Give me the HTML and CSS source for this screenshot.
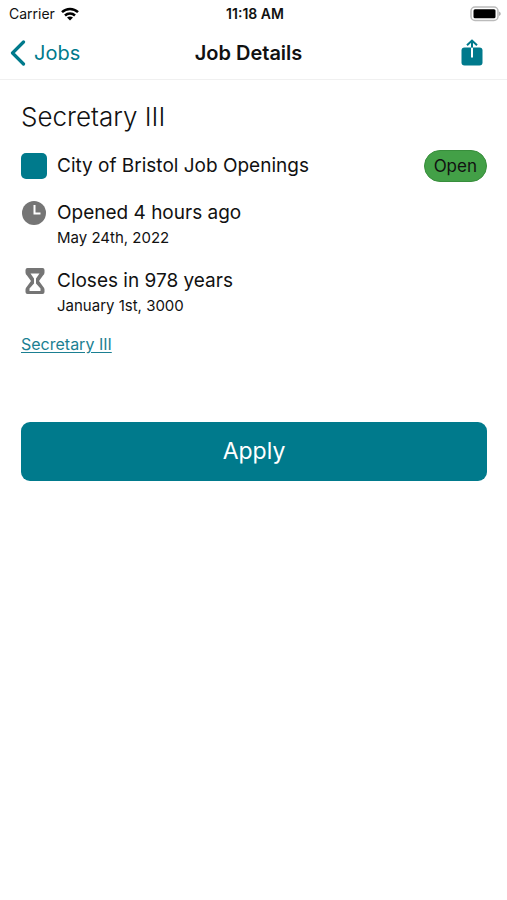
FILE: index.html
```html
<!DOCTYPE html>
<html lang="en">
<head>
<meta charset="utf-8">
<meta name="viewport" content="width=device-width, initial-scale=1">
<title>Job Details</title>
<link rel="stylesheet" href="styles.css">
</head>
<body>
<div class="status-bar">
  <div class="carrier">
    <span>Carrier</span>
    <svg width="18" height="14" viewBox="0 0 18 14" aria-hidden="true">
      <g fill="none" stroke="#000" stroke-width="2.5">
        <path d="M1 5.2C5.500 .9 12.500 .9 17 5.200"/>
        <path d="M4 8.500C6.800 5.800 11.200 5.800 14 8.500"/>
      </g>
      <path d="M9 13.500 6 10.600C7.700 9 10.300 9 12 10.600Z"/>
    </svg>
  </div>
  <span class="time">11:18 AM</span>
  <svg class="battery" width="32" height="16" viewBox="0 0 32 16" aria-hidden="true">
    <rect x="2" y="1" width="27" height="13.500" rx="4" fill="#fff" stroke="#bbb" stroke-width="1.500"/>
    <rect x="4.500" y="3.200" width="22" height="9" rx="1.500" fill="#000"/>
    <path d="M30 5.500c2.300.8 2.300 3.700 0 4.500z" fill="#b0b0b0"/>
  </svg>
</div>
<header class="nav">
  <a class="back" href="#jobs">
    <svg width="16" height="26" viewBox="0 0 16 26" aria-hidden="true">
      <path d="M13.500 2 2.500 13l11 11" fill="none" stroke="currentColor" stroke-width="3.200" stroke-linecap="round" stroke-linejoin="round"/>
    </svg>
    <span>Jobs</span>
  </a>
  <h1 class="nav-title">Job Details</h1>
  <button class="share" type="button" aria-label="Share">
    <svg width="22" height="28" viewBox="0 0 22 28" aria-hidden="true">
      <rect x=".5" y="8.500" width="21" height="18" rx="3" fill="currentColor"/>
      <path d="M11 8.500v10" stroke="#fff" stroke-width="2"/>
      <path d="M11 8.500V2M6 6.200 11 1.500l5 4.700" fill="none" stroke="currentColor" stroke-width="2"/>
    </svg>
  </button>
</header>
<main class="content">
  <h2 class="job-title">Secretary III</h2>
  <div class="row agency">
    <span class="swatch"></span>
    <span class="label">City of Bristol Job Openings</span>
    <span class="badge">Open</span>
  </div>
  <div class="row">
    <svg width="26" height="26" viewBox="0 0 26 26" aria-hidden="true">
      <circle cx="13" cy="13" r="12" fill="#757575"/>
      <path d="M13.500 5v8.500H19.500" fill="none" stroke="#fff" stroke-width="2"/>
    </svg>
    <div>
      <div class="label">Opened 4 hours ago</div>
      <div class="date">May 24th, 2022</div>
    </div>
  </div>
  <div class="row">
    <svg width="26" height="26" viewBox="0 0 26 26" aria-hidden="true">
      <path fill="#757575" fill-rule="evenodd" d="M6.500 0h15q2 0 2 2v2.500q0 2-1.500 3L18 13l4 5.500q1.500 1.500 1.500 3V24q0 2-2 2h-15q-2 0-2-2v-2.500q0-1.500 1.500-3L10 13 6 7.500q-1.500-1-1.500-3V2q0-2 2-2ZM9.500 5.500l3.500 5v5L8.500 20.500v2.500h11v-2.500L15 15.500v-5L18.500 5.500Z"/>
    </svg>
    <div>
      <div class="label">Closes in 978 years</div>
      <div class="date">January 1st, 3000</div>
    </div>
  </div>
  <a class="job-link" href="#secretary">Secretary III</a>
  <button class="apply" type="button">Apply</button>
</main>
</body>
</html>
```
FILE: styles.css
```css
* {
  box-sizing: border-box;
}

body {
  margin: 0;
  background: #fff;
  color: #111;
  font-family: Inter, "Liberation Sans", sans-serif;
}

.status-bar,
.nav {
  display: grid;
  grid-template-columns: 1fr auto 1fr;
  align-items: center;
}

.status-bar {
  height: 27px;
  padding: 0 6px 0 9px;
  font-size: 14px;
}

.carrier {
  display: flex;
  align-items: center;
  gap: 6px;
}

.time {
  font-weight: 600;
}

.battery {
  justify-self: end;
}

.nav {
  height: 53px;
  padding: 0 20px 0 10px;
  border-bottom: 1px solid #f0f0f0;
}

.back {
  display: flex;
  align-items: center;
  gap: 8px;
  color: #007a8c;
  font-size: 20px;
  text-decoration: none;
}

.nav-title {
  margin: 0;
  font-size: 20px;
  font-weight: 600;
}

.share {
  display: flex;
  justify-self: end;
  padding: 0 4px;
  border: 0;
  background: none;
  color: #007a8c;
}

.content {
  display: flex;
  flex-direction: column;
  padding: 19px 20px 20px 21px;
}

.job-title {
  margin: 0 0 15px;
  font-size: 26px;
  font-weight: 300;
  line-height: 36px;
}

.row {
  display: flex;
  align-items: flex-start;
  gap: 10px;
  margin-bottom: 18px;
}

.row:last-of-type {
  margin-bottom: 14px;
}

.agency {
  align-items: center;
}

.swatch {
  width: 26px;
  height: 26px;
  border-radius: 5px;
  background: #007a8c;
}

.label {
  flex: 1;
  font-size: 19px;
  line-height: 26px;
}

.date {
  font-size: 15px;
  line-height: 24px;
}

.badge {
  padding: 0 9px;
  border: 1px solid #388e3c;
  border-radius: 16px;
  background: #43a047;
  font-size: 17px;
  line-height: 30px;
}

.job-link {
  align-self: flex-start;
  color: #1b7f92;
  font-size: 16px;
  line-height: 24px;
  text-underline-offset: 2px;
}

.apply {
  margin-top: 66px;
  padding: 14px;
  border: 0;
  border-radius: 9px;
  background: #007a8c;
  color: #fff;
  font-family: inherit;
  font-size: 23px;
  line-height: 31px;
}
```
